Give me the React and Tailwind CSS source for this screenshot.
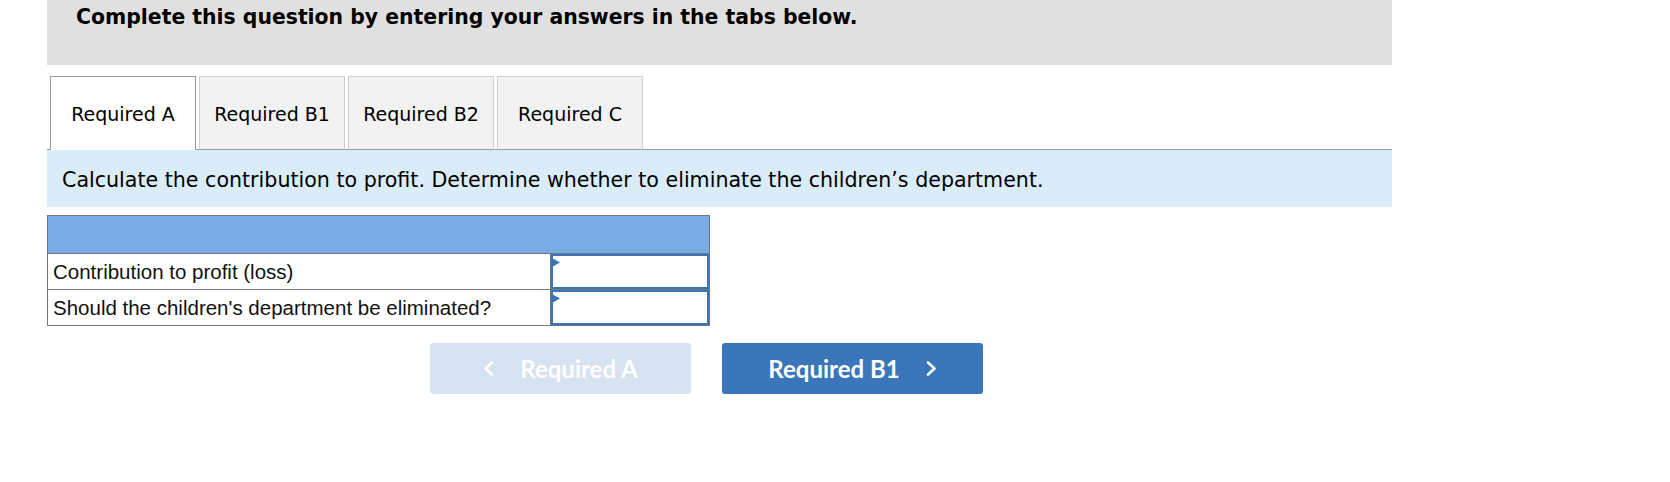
const tabs = ["Required A", "Required B1", "Required B2", "Required C"];

const rows = ["Contribution to profit (loss)", "Should the children's department be eliminated?"];

function Chevron({ dir }) {
  return (
    <svg width="11" height="15" viewBox="0 0 11 15" fill="none" stroke="currentColor" strokeWidth="2.6" strokeLinecap="round" strokeLinejoin="round">
      {dir === "left" ? <polyline points="9,1.5 2.5,7.5 9,13.5" /> : <polyline points="2,1.5 8.5,7.5 2,13.5" />}
    </svg>
  );
}

function AnswerCell() {
  return (
    <div className="relative h-full border-2 border-[#3a73b8] bg-white">
      {/* little marker in the corner */}
      <svg className="absolute left-[-1px] top-[2px]" width="8" height="9" viewBox="0 0 8 9">
        <polygon points="0,0 8,4.5 0,9" fill="#3a73b8" />
      </svg>
    </div>
  );
}

export default function App() {
  return (
    <div className="min-h-[482px] bg-white pl-[47px] w-[1392px]">
      {/* question header */}
      <div className="h-[65px] bg-[#e0e0e0] pl-[29px] pt-[5px]">
        <h2 className="font-['DejaVu_Sans',sans-serif] text-[20.4px] leading-[24px] font-bold text-black">
          Complete this question by entering your answers in the tabs below.
        </h2>
      </div>

      {/* tabs */}
      <div className="mt-[11px] flex h-[74px] gap-[3px] border-b border-[#9a9a9a] pl-[3px] font-['DejaVu_Sans',sans-serif]">
        {tabs.map((t, i) =>
          i === 0 ? (
            <div key={t} className="-mb-px flex h-[74px] w-[146px] items-center justify-center border border-b-0 border-[#9a9a9a] bg-white pt-[2px] text-[19px] text-black">
              {t}
            </div>
          ) : (
            <div key={t} className="-mb-px flex h-[74px] w-[146px] items-center justify-center border border-[#cfcfcf] border-b-[#9a9a9a] bg-[#f2f2f2] pt-[2px] text-[19px] text-black">
              {t}
            </div>
          )
        )}
      </div>

      {/* instructions */}
      <div className="flex h-[57px] items-center bg-[#dbecf9] pl-[15px] pt-[3px] font-['DejaVu_Sans',sans-serif] text-[20.6px] text-black">
        Calculate the contribution to profit. Determine whether to eliminate the children’s department.
      </div>

      {/* answer table */}
      <div className="mt-[8px] w-[663px] border border-[#777] font-['Liberation_Sans',Arial,sans-serif] text-[20.5px] text-[#111]">
        <div className="h-[37px] bg-[#79ace4]" />
        {rows.map((r) => (
          <div key={r} className="grid h-[36px] grid-cols-[503px_1fr] border-t border-[#777]">
            <div className="flex items-center border-r border-[#777] pl-[5px] pt-[2px]">{r}</div>
            <AnswerCell />
          </div>
        ))}
      </div>

      {/* nav buttons */}
      <div className="ml-[383px] mt-[17px] flex gap-[31px] font-['Lato',sans-serif] text-[24px] font-bold">
        <button className="flex h-[51px] w-[261px] items-center justify-center gap-[26px] rounded-[3px] bg-[#d7e3f1] text-white">
          <Chevron dir="left" />
          <span>Required A</span>
        </button>
        <button className="flex h-[51px] w-[261px] items-center justify-center gap-[26px] rounded-[3px] bg-[#3a76b9] text-white">
          <span>Required B1</span>
          <Chevron dir="right" />
        </button>
      </div>
    </div>
  );
}
